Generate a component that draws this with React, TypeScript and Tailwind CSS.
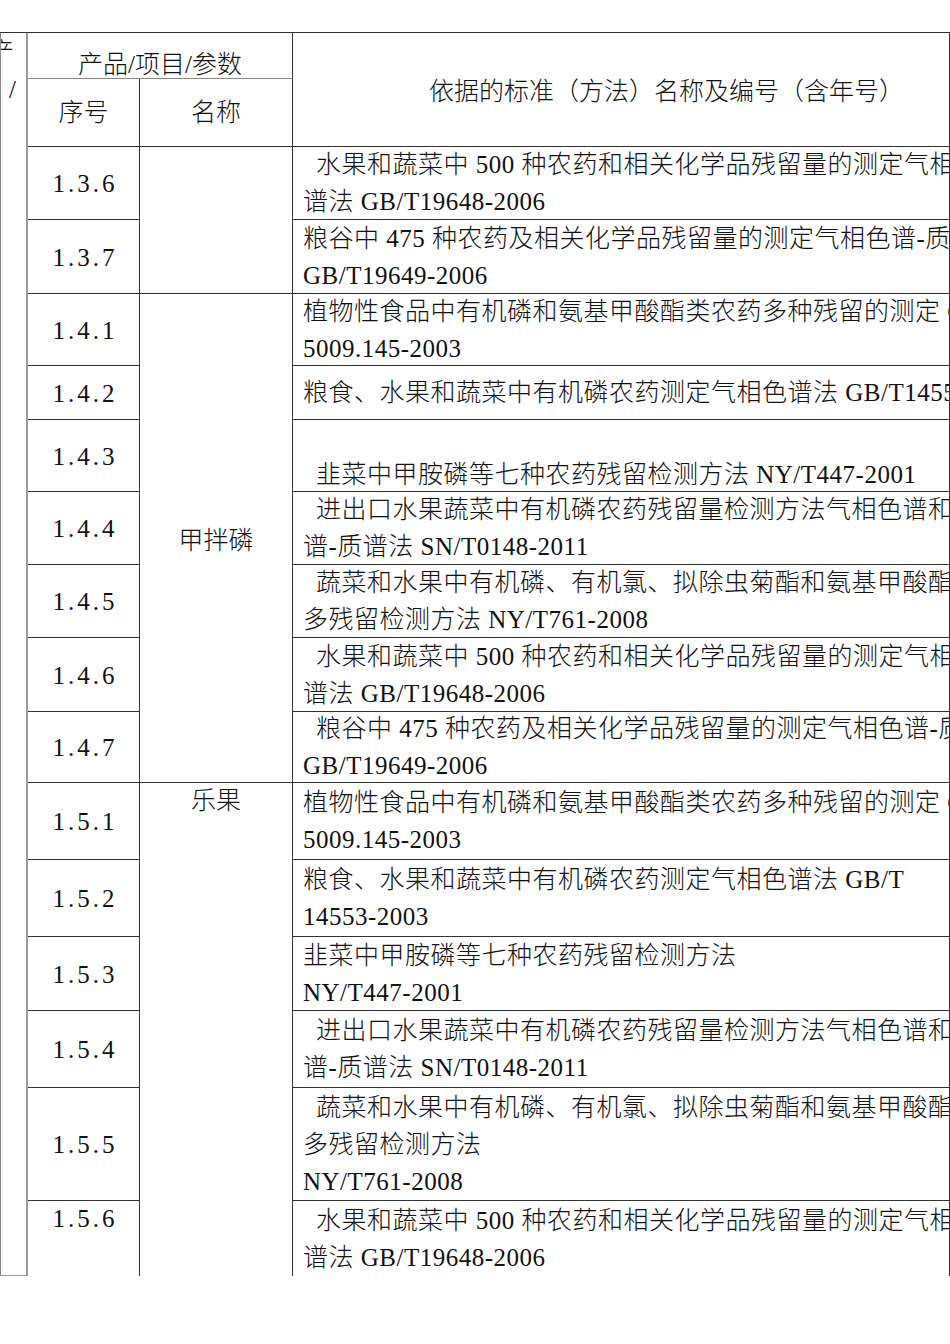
import React from "react";

type Row = {
  no: string;
  lines: string[];
  noTop?: boolean;
};

const E = "\u2002";

const ROWS: Row[] = [
  { no: "1.3.6", lines: [`${E}水果和蔬菜中 500 种农药和相关化学品残留量的测定气相色谱-质`, "谱法 GB/T19648-2006"] },
  { no: "1.3.7", lines: ["粮谷中 475 种农药及相关化学品残留量的测定气相色谱-质谱法", "GB/T19649-2006"] },
  { no: "1.4.1", lines: ["植物性食品中有机磷和氨基甲酸酯类农药多种残留的测定 GB/T", "5009.145-2003"] },
  { no: "1.4.2", lines: ["粮食、水果和蔬菜中有机磷农药测定气相色谱法 GB/T14553-2003"] },
  { no: "1.4.3", lines: ["\u00a0", `${E}韭菜中甲胺磷等七种农药残留检测方法 NY/T447-2001`] },
  { no: "1.4.4", lines: [`${E}进出口水果蔬菜中有机磷农药残留量检测方法气相色谱和气相色`, "谱-质谱法 SN/T0148-2011"] },
  { no: "1.4.5", lines: [`${E}蔬菜和水果中有机磷、有机氯、拟除虫菊酯和氨基甲酸酯类农药`, "多残留检测方法 NY/T761-2008"] },
  { no: "1.4.6", lines: [`${E}水果和蔬菜中 500 种农药和相关化学品残留量的测定气相色谱-质`, "谱法 GB/T19648-2006"] },
  { no: "1.4.7", lines: [`${E}粮谷中 475 种农药及相关化学品残留量的测定气相色谱-质谱法`, "GB/T19649-2006"] },
  { no: "1.5.1", lines: ["植物性食品中有机磷和氨基甲酸酯类农药多种残留的测定 GB/T", "5009.145-2003"] },
  { no: "1.5.2", lines: ["粮食、水果和蔬菜中有机磷农药测定气相色谱法 GB/T", "14553-2003"] },
  { no: "1.5.3", lines: ["韭菜中甲胺磷等七种农药残留检测方法", "NY/T447-2001"] },
  { no: "1.5.4", lines: [`${E}进出口水果蔬菜中有机磷农药残留量检测方法气相色谱和气相色`, "谱-质谱法 SN/T0148-2011"] },
  { no: "1.5.5", lines: [`${E}蔬菜和水果中有机磷、有机氯、拟除虫菊酯和氨基甲酸酯类农药`, "多残留检测方法", "NY/T761-2008"] },
  { no: "1.5.6", lines: [`${E}水果和蔬菜中 500 种农药和相关化学品残留量的测定气相色谱-质`, "谱法 GB/T19648-2006"], noTop: true },
];

// name cells: starting row index -> cell
const NAMES: Record<number, { label: string; span: string; top?: boolean; last?: boolean }> = {
  0: { label: "", span: "row-span-2" },
  2: { label: "甲拌磷", span: "row-span-7" },
  9: { label: "乐果", span: "row-span-6", top: true, last: true },
};

const line = "border-[#333]";

export default function App() {
  return (
    <div className="w-[950px] h-[1344px] bg-white overflow-hidden text-[#111] font-['Liberation_Serif','Noto_Sans_CJK_SC',serif] font-light text-[25px]">
      <div className="pt-[32px]">
        <div className="grid grid-cols-[28px_112px_153px_657px] grid-rows-[46px_68px_73px_74px_72px_54px_72px_73px_73px_74px_71px_77px_77px_74px_77px_113px_75px] border-t border-[#333]">
          {/* cut-off first column */}
          <div className="col-start-1 row-start-1 row-span-17 border-l border-r-2 border-b border-l-[#8c8c8c] border-r-[#9a9a9a] border-b-[#9a9a9a] overflow-hidden">
            <div className="flex flex-col leading-[38px] whitespace-nowrap">
              <span className="-ml-[12px]">产</span>
              <span className="ml-[8px]">/</span>
            </div>
          </div>

          {/* header */}
          <div className={`col-start-2 col-span-2 row-start-1 border-r border-b ${line} border-b-[#888] flex items-end justify-center leading-[26px]`}>
            产品/项目/参数
          </div>
          <div className={`col-start-4 row-start-1 row-span-2 border-r border-b ${line} flex items-center pl-[136px] pt-[4px] whitespace-nowrap overflow-hidden`}>
            依据的标准（方法）名称及编号（含年号）
          </div>
          <div className={`col-start-2 row-start-2 border-r border-b ${line} flex items-center justify-center`}>
            序号
          </div>
          <div className={`col-start-3 row-start-2 border-r border-b ${line} flex items-center justify-center`}>
            名称
          </div>

          {ROWS.map((r, i) => {
            const last = i === ROWS.length - 1;
            const name = NAMES[i];
            return (
              <React.Fragment key={r.no}>
                <div
                  className={`col-start-2 border-r ${last ? "" : "border-b"} ${line} flex justify-center ${
                    r.noTop ? "items-start leading-[36px]" : "items-center pt-[2px]"
                  }`}
                >
                  <span className="tracking-[3px] pl-[3px]">{r.no}</span>
                </div>
                {name && (
                  <div
                    className={`col-start-3 ${name.span} border-r ${name.last ? "" : "border-b"} ${line} flex justify-center leading-[36px] ${
                      name.top ? "items-start" : "items-center pt-[6px]"
                    }`}
                  >
                    {name.label}
                  </div>
                )}
                <div
                  className={`col-start-4 border-r ${last ? "" : "border-b"} ${line} flex flex-col justify-center pl-[10px] leading-[37px] tracking-[0.5px] whitespace-nowrap overflow-hidden`}
                >
                  {r.lines.map((t, j) => (
                    <span key={j}>{t}</span>
                  ))}
                </div>
              </React.Fragment>
            );
          })}
        </div>
      </div>
    </div>
  );
}
